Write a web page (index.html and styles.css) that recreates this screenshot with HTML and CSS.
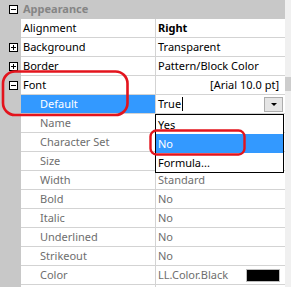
FILE: index.html
```html
<!DOCTYPE html>
<html>
  <head>
    <title>Property Grid</title>
    <link rel="stylesheet" href="styles.css">
  </head>
  <body>
    <div class="frame">
      <div class="grid">
        <div class="group">
          <div class="gut"><span class="box minus"></span></div>
          <div class="group-title">Appearance</div>
        </div>
        <div class="row">
          <div class="gut"></div>
          <div class="key">Alignment</div>
          <div class="val bold">Right</div>
        </div>
        <div class="row">
          <div class="gut"><span class="box plus"></span></div>
          <div class="key">Background</div>
          <div class="val">Transparent</div>
        </div>
        <div class="row">
          <div class="gut"><span class="box plus"></span></div>
          <div class="key">Border</div>
          <div class="val">Pattern/Block Color</div>
        </div>
        <div class="row">
          <div class="gut"><span class="box minus"></span></div>
          <div class="key">Font</div>
          <div class="val right">[Arial 10.0 pt]</div>
        </div>
        <div class="row">
          <div class="gut"></div>
          <div class="key sub selected">Default</div>
          <div class="val editor">
            <span class="edit-text">True</span><span class="caret"></span>
            <span class="drop-btn"><span class="arrow"></span></span>
          </div>
        </div>
        <div class="row">
          <div class="gut"></div>
          <div class="key sub">Name</div>
          <div class="val dim"></div>
        </div>
        <div class="row">
          <div class="gut"></div>
          <div class="key sub">Character Set</div>
          <div class="val dim"></div>
        </div>
        <div class="row">
          <div class="gut"></div>
          <div class="key sub">Size</div>
          <div class="val dim"></div>
        </div>
        <div class="row">
          <div class="gut"></div>
          <div class="key sub">Width</div>
          <div class="val dim">Standard</div>
        </div>
        <div class="row">
          <div class="gut"></div>
          <div class="key sub">Bold</div>
          <div class="val dim">No</div>
        </div>
        <div class="row">
          <div class="gut"></div>
          <div class="key sub">Italic</div>
          <div class="val dim">No</div>
        </div>
        <div class="row">
          <div class="gut"></div>
          <div class="key sub">Underlined</div>
          <div class="val dim">No</div>
        </div>
        <div class="row">
          <div class="gut"></div>
          <div class="key sub">Strikeout</div>
          <div class="val dim">No</div>
        </div>
        <div class="row">
          <div class="gut"></div>
          <div class="key sub">Color</div>
          <div class="val dim color-val">LL.Color.Black<span class="swatch"></span></div>
        </div>
        <div class="row">
          <div class="gut"></div>
          <div class="key sub"></div>
          <div class="val"></div>
        </div>

        <ul class="droplist">
          <li>Yes</li>
          <li class="hot">No</li>
          <li>Formula...</li>
        </ul>

        <svg class="marks" width="285" height="287" viewBox="0 0 285 287">
          <rect x="3" y="71.5" width="124.5" height="43.5" rx="12" ry="12" fill="none" stroke="#e3141d" stroke-width="2.6"/>
          <rect x="150.5" y="130.5" width="94" height="24" rx="6" ry="6" fill="none" stroke="#e3141d" stroke-width="2.4"/>
        </svg>
      </div>
      <div class="scroll"><div class="thumb"></div></div>
    </div>
  </body>
</html>
```
FILE: styles.css
```css
body {
  margin: 0;
  overflow: hidden;
  background: #fff;
  font-family: "Noto Sans", "DejaVu Sans", sans-serif;
  font-size: 11px;
  color: #000;
}

.frame {
  display: flex;
  width: 291px;
  height: 287px;
  overflow: hidden;
}

.grid {
  position: relative;
  width: 285px;
  flex: none;
}

.scroll {
  width: 6px;
  background: #f0f0f0;
}

.thumb {
  margin-top: 77px;
  height: 14px;
  background: #cdcdcd;
}

.group {
  display: flex;
  height: 19px;
  background: #c8c8c8;
}

.group-title {
  padding-left: 2px;
  line-height: 18px;
  font-weight: bold;
  color: #858585;
}

.row {
  display: flex;
  height: 19px;
}

.gut {
  width: 21px;
  flex: none;
  background: #c8c8c8;
  position: relative;
}

.key {
  width: 132px;
  flex: none;
  padding-left: 2px;
  line-height: 18px;
  border-right: 1px solid #d3d3d3;
  border-bottom: 1px solid #d3d3d3;
  white-space: nowrap;
  overflow: hidden;
}

.key.sub {
  width: 115px;
  padding-left: 19px;
  color: #6e6e6e;
}

.key.selected {
  background: #3399ff;
  color: #fff;
}

.val {
  flex: 1;
  padding-left: 2px;
  line-height: 18px;
  border-bottom: 1px solid #d3d3d3;
  white-space: nowrap;
  overflow: hidden;
}

.val.bold {
  font-weight: bold;
}

.val.right {
  text-align: right;
  padding-right: 6px;
}

.val.dim {
  color: #6e6e6e;
}

/* expand / collapse boxes */
.box {
  position: absolute;
  left: 9px;
  top: 5px;
  width: 7px;
  height: 7px;
  border: 1px solid #000;
  background: #fff;
}

.box::before,
.box::after {
  content: "";
  position: absolute;
  background: #000;
}

.box::before {
  left: 1px;
  top: 3px;
  width: 5px;
  height: 1px;
}

.box.plus::after {
  left: 3px;
  top: 1px;
  width: 1px;
  height: 5px;
}

/* inline editor */
.editor {
  display: flex;
  align-items: center;
}

.caret {
  width: 1px;
  height: 14px;
  background: #000;
  margin-left: 1px;
}

.drop-btn {
  margin-left: auto;
  margin-right: 2px;
  width: 17px;
  height: 13px;
  border: 1px solid #adadad;
  background: #e5e5e5;
  display: flex;
  align-items: center;
  justify-content: center;
}

.arrow {
  width: 0;
  height: 0;
  border-left: 3px solid transparent;
  border-right: 3px solid transparent;
  border-top: 3px solid #000;
}

.color-val {
  display: flex;
  align-items: center;
}

.swatch {
  margin-left: auto;
  margin-right: 5px;
  width: 32px;
  height: 11px;
  background: #000;
  border: 1px solid #bdbdbd;
}

/* dropdown list */
.droplist {
  position: absolute;
  left: 155px;
  top: 114px;
  width: 127px;
  margin: 0;
  padding: 0;
  list-style: none;
  background: #fff;
  border: 1px solid #000;
}

.droplist li {
  height: 19px;
  line-height: 19px;
  padding-left: 2px;
}

.droplist li.hot {
  background: #3399ff;
  color: #fff;
}

.marks {
  position: absolute;
  left: 0;
  top: 0;
  pointer-events: none;
}
```
